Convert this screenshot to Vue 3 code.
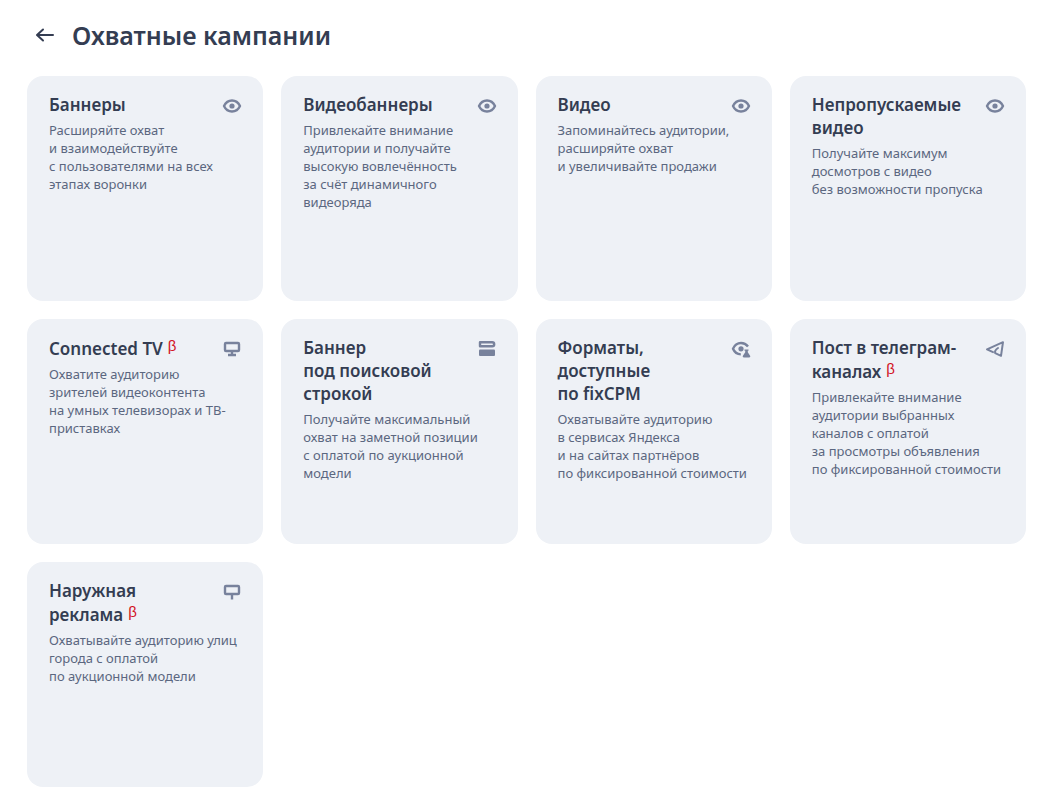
<template>
  <main class="page">
    <header class="header">
      <button class="back" type="button" aria-label="Назад">
        <svg width="20" height="20" viewBox="0 0 20 20">
          <path d="M8 4.5 2 10l6 5.500M2.500 10H18" />
        </svg>
      </button>
      <h1>Охватные кампании</h1>
    </header>

    <section class="grid">
      <a v-for="card in cards" :key="card.title" class="card" href="#">
        <div class="card-head">
          <h2>{{ card.title }}<span v-if="card.beta" class="beta">β</span></h2>
          <svg class="icon" width="20" height="20" viewBox="0 0 20 20">
            <template v-if="card.icon === 'eye'">
              <path d="M2 10C3.800 6.200 6.600 4.500 10 4.500S16.200 6.200 18 10C16.200 13.800 13.400 15.500 10 15.500S3.800 13.800 2 10Z" />
              <circle class="fill" cx="10" cy="10" r="2.600" />
            </template>
            <template v-else-if="card.icon === 'tv'">
              <rect x="3" y="4" width="14" height="8" rx="1" />
              <path d="M10 12V16M6 16h8" />
            </template>
            <template v-else-if="card.icon === 'rows'">
              <path d="M3 3.200H15.200a2 2 0 0 1 0 4H3Z" />
              <rect class="fill" x="2" y="10.500" width="16" height="6.500" rx="1" />
            </template>
            <template v-else-if="card.icon === 'fix'">
              <path d="M17 7.500C15.200 5.200 12.800 4 10 4 6.400 4 3.600 6 2 9.800c1.600 3.700 4.200 5.500 7.800 5.600" />
              <circle class="fill" cx="10" cy="9.800" r="2.600" />
              <path class="fill" d="M13.500 10.500h4v1.200h-.7v1.600l2.300 3.500c.5 1-.1 1.700-1 1.700h-5.200c-.9 0-1.500-.7-1-1.700l2.300-3.500v-1.600h-.7Z" />
            </template>
            <template v-else-if="card.icon === 'plane'">
              <path class="thin" d="M8 13.200 2 10.400 18 3.200 16 16.800 10.200 14.200C9.500 12 10.500 10.500 13 9" />
            </template>
            <template v-else>
              <rect x="3" y="4" width="14" height="8" rx="1" />
              <path d="M10 12V17.500" />
            </template>
          </svg>
        </div>
        <p>{{ card.text }}</p>
      </a>
    </section>
  </main>
</template>

<script setup>
const cards = [
  {
    title: "Баннеры",
    icon: "eye",
    text: "Расширяйте охват\nи взаимодействуйте\nс пользователями на всех\nэтапах воронки",
  },
  {
    title: "Видеобаннеры",
    icon: "eye",
    text: "Привлекайте внимание\nаудитории и получайте\nвысокую вовлечённость\nза счёт динамичного\nвидеоряда",
  },
  {
    title: "Видео",
    icon: "eye",
    text: "Запоминайтесь аудитории,\nрасширяйте охват\nи увеличивайте продажи",
  },
  {
    title: "Непропускаемые\nвидео",
    icon: "eye",
    text: "Получайте максимум\nдосмотров с видео\nбез возможности пропуска",
  },
  {
    title: "Connected TV",
    icon: "tv",
    beta: true,
    text: "Охватите аудиторию\nзрителей видеоконтента\nна умных телевизорах и ТВ-\nприставках",
  },
  {
    title: "Баннер\nпод поисковой\nстрокой",
    icon: "rows",
    text: "Получайте максимальный\nохват на заметной позиции\nс оплатой по аукционной\nмодели",
  },
  {
    title: "Форматы,\nдоступные\nпо fixCPM",
    icon: "fix",
    text: "Охватывайте аудиторию\nв сервисах Яндекса\nи на сайтах партнёров\nпо фиксированной стоимости",
  },
  {
    title: "Пост в телеграм-\nканалах",
    icon: "plane",
    beta: true,
    text: "Привлекайте внимание\nаудитории выбранных\nканалов с оплатой\nза просмотры объявления\nпо фиксированной стоимости",
  },
  {
    title: "Наружная\nреклама",
    icon: "billboard",
    beta: true,
    text: "Охватывайте аудиторию улиц\nгорода с оплатой\nпо аукционной модели",
  },
];
</script>

<style>
body {
  margin: 0;
  background: #fff;
}
</style>

<style scoped>
.page {
  padding: 16px 21px 10px 27px;
  font-family: "Noto Sans", "Open Sans", sans-serif;
  color: #343d52;
}

.header {
  display: flex;
  align-items: center;
  gap: 17px;
  height: 38px;
  margin-bottom: 22px;
  padding-left: 8px;
}

.back {
  display: flex;
  padding: 0;
  border: 0;
  background: none;
  cursor: pointer;
}

.back svg {
  fill: none;
  stroke: #343d52;
  stroke-width: 2;
  stroke-linecap: round;
  stroke-linejoin: round;
}

h1 {
  margin: 0;
  font-size: 25px;
  line-height: 38px;
  font-weight: 600;
  white-space: nowrap;
}

.grid {
  display: grid;
  grid-template-columns: repeat(4, minmax(0, 1fr));
  gap: 18px;
}

.card {
  box-sizing: border-box;
  min-height: 225px;
  padding: 17px 22px;
  border-radius: 16px;
  background: #eef1f6;
  color: inherit;
  text-decoration: none;
}

.card-head {
  display: flex;
  justify-content: space-between;
  align-items: flex-start;
}

h2 {
  margin: 0;
  font-size: 17px;
  line-height: 23px;
  font-weight: 600;
  white-space: pre;
}

.beta {
  margin-left: 5px;
  color: #d2121e;
  font-family: "Liberation Sans", sans-serif;
  font-size: 15px;
  line-height: 20px;
  font-weight: 400;
  vertical-align: 4px;
}

.icon {
  flex: none;
  margin-top: 3px;
  margin-right: -1px;
  fill: none;
  stroke: #78829c;
  stroke-width: 2.4;
  stroke-linejoin: round;
}

.icon .fill {
  fill: #78829c;
  stroke: none;
}

.icon .thin {
  stroke-width: 2;
  stroke-linecap: round;
}

p {
  margin: 5px 0 0;
  font-size: 13px;
  line-height: 18px;
  color: #5b6780;
  white-space: pre;
}
</style>
